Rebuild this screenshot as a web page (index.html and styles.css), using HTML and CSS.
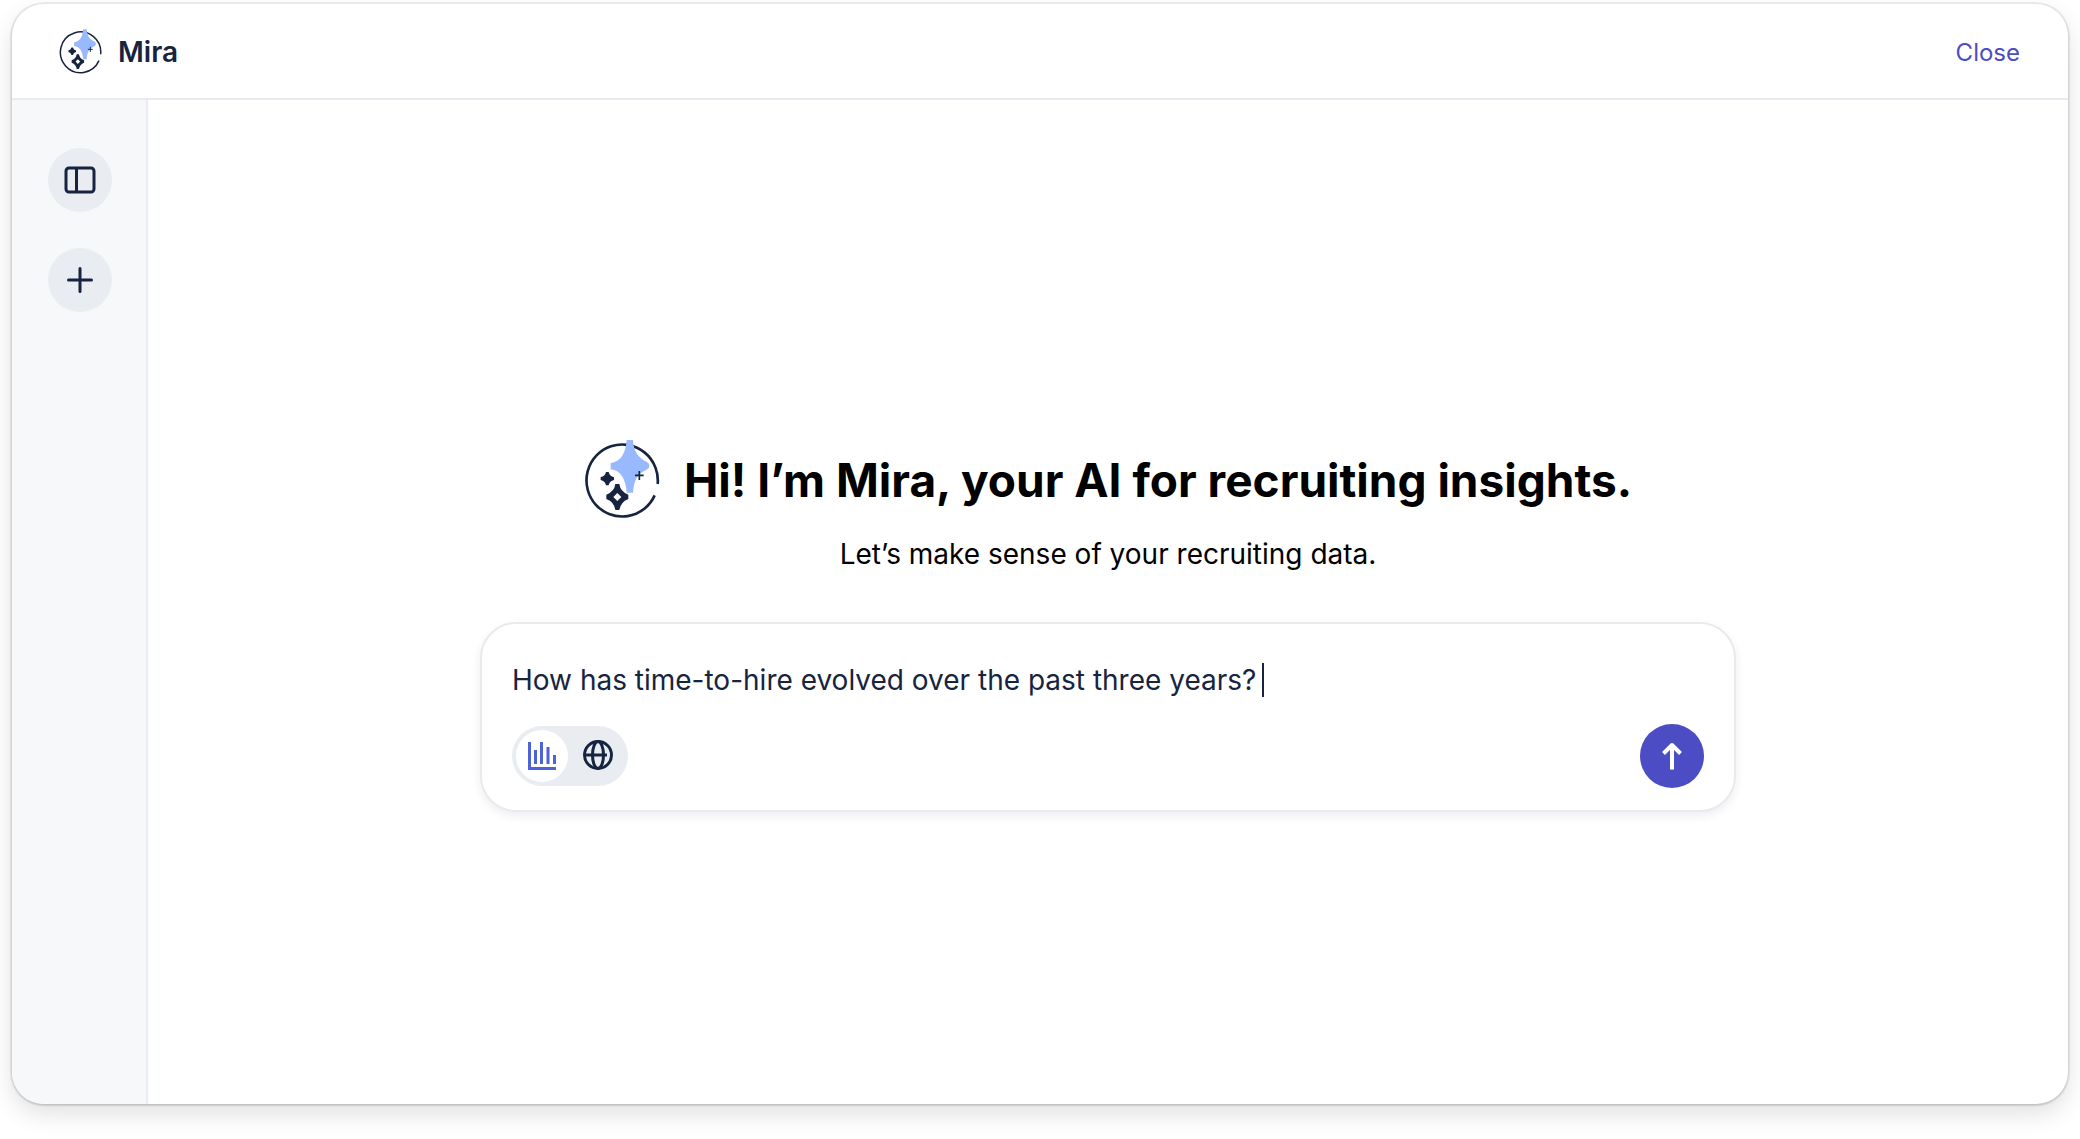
FILE: index.html
```html
<!DOCTYPE html>
<html lang="en">
<head>
  <meta charset="utf-8">
  <meta name="viewport" content="width=device-width, initial-scale=1">
  <title>Mira</title>
  <link rel="stylesheet" href="styles.css">
</head>
<body>
  <svg class="sprite" aria-hidden="true">
    <symbol id="mira-logo" viewBox="20 30 228 240">
      <path d="M241 162A107 108 0 1 0 232 196" fill="none" stroke="#172440" stroke-width="8"/>
      <path d="M148 30H167C169 62 180 82 209 96Q216 100 216 108Q216 116 207 120C180 132 170 150 167 188H148C145 148 132 122 100 118V99C132 95 145 68 148 30Z" fill="#99b9ff"/>
      <path d="M186 123V150M173 136H199" fill="none" stroke="#172440" stroke-width="5"/>
      <path d="M86 126H94Q97 139 110 142V150Q97 153 94 166H86Q83 153 70 150V142Q83 139 86 126Z" fill="#172440"/>
      <path fill-rule="evenodd" d="M114 162H126Q129 185 153 194V207Q130 216 126 240H114Q111 216 87 207V194Q111 185 114 162ZM120 189L108 201L120 213L132 201Z" fill="#172440"/>
    </symbol>
  </svg>

  <div class="window">
    <header class="topbar">
      <div class="brand">
        <svg class="brand-logo" aria-hidden="true"><use href="#mira-logo"/></svg>
        <span class="brand-name">Mira</span>
      </div>
      <button class="close" type="button">Close</button>
    </header>

    <div class="body">
      <nav class="sidebar" aria-label="Chats">
        <button class="round" type="button" aria-label="Toggle sidebar">
          <svg class="icon" viewBox="0 0 32 32" aria-hidden="true"><rect x="2" y="4" width="28" height="24" rx="3"/><path d="M12.500 4V28"/></svg>
        </button>
        <button class="round" type="button" aria-label="New chat">
          <svg class="icon" viewBox="0 0 32 32" aria-hidden="true"><path d="M16 4.500V27.500M4.500 16H27.500" stroke-linecap="round"/></svg>
        </button>
      </nav>

      <main class="content">
        <div class="greeting">
          <svg class="greeting-logo" aria-hidden="true"><use href="#mira-logo"/></svg>
          <h1 class="title">Hi! I’m Mira, your AI for recruiting insights.</h1>
        </div>
        <p class="subtitle">Let’s make sense of your recruiting data.</p>

        <form class="prompt">
          <label class="field">
            <input class="question" type="text" aria-label="Ask Mira" value="How has time-to-hire evolved over the past three years?">
            <span class="caret"></span>
          </label>
          <div class="actions">
            <div class="modes" role="radiogroup" aria-label="Source">
              <label class="mode">
                <input class="mode-input" type="radio" name="mode" aria-label="Your data" checked>
                <svg class="icon" viewBox="0 0 32 32" aria-hidden="true"><path d="M3.500 2V28.500H30M9.500 10V24M15.500 2V24M22 7V24M28.500 15V24"/></svg>
              </label>
              <label class="mode">
                <input class="mode-input" type="radio" name="mode" aria-label="Web">
                <svg class="icon" viewBox="0 0 32 32" aria-hidden="true"><circle cx="16" cy="15" r="13.500"/><ellipse cx="16" cy="15" rx="5.500" ry="13.500"/><path d="M2.500 15H25"/></svg>
              </label>
            </div>
            <button class="send" type="submit" aria-label="Send">
              <svg class="icon" viewBox="0 0 32 32" aria-hidden="true"><path d="M16 29.500V5M7.500 13.500L16 5L24.500 13.500" stroke-width="4" stroke-linejoin="round"/></svg>
            </button>
          </div>
        </form>
      </main>
    </div>
  </div>
</body>
</html>
```
FILE: styles.css
```css
* {
  box-sizing: border-box;
}

body {
  margin: 0;
  min-height: 100vh;
  padding: 4px 12px 35px;
  display: flex;
  background: #fff;
  color: #000;
  font-family: Inter, "Liberation Sans", sans-serif;
}

button,
input {
  font: inherit;
  color: inherit;
}

button {
  padding: 0;
  border: 0;
  background: none;
  cursor: pointer;
}

.sprite {
  position: absolute;
  width: 0;
  height: 0;
}

.window {
  flex: 1;
  display: flex;
  flex-direction: column;
  overflow: hidden;
  border-radius: 32px;
  background: #fff;
  box-shadow:
    0 0 0 2px rgba(0, 0, 0, 0.06),
    0 1px 3px rgba(0, 0, 0, 0.15),
    0 10px 24px rgba(0, 0, 0, 0.12);
}

.topbar {
  display: flex;
  align-items: center;
  justify-content: space-between;
  height: 96px;
  padding: 2px 48px 0 47px;
  border-bottom: 2px solid #e9eaef;
}

.brand {
  display: flex;
  align-items: center;
  gap: 16px;
  color: #172440;
}

.brand-logo {
  width: 43px;
  height: 46px;
}

.brand-name {
  font-size: 28px;
  font-weight: 600;
}

.close {
  color: #4c4cc4;
  font-size: 24px;
}

.body {
  flex: 1;
  display: flex;
}

.sidebar {
  display: flex;
  flex-direction: column;
  align-items: center;
  gap: 36px;
  width: 136px;
  padding: 48px 0 0 2px;
  border-right: 2px solid #e9ecf2;
  background: #f6f8fa;
}

.round,
.send {
  display: grid;
  place-items: center;
  width: 64px;
  height: 64px;
  border-radius: 50%;
}

.round {
  background: #e9edf2;
  color: #172440;
}

.icon {
  width: 32px;
  height: 32px;
  fill: none;
  stroke: currentColor;
  stroke-width: 3;
}

.content {
  flex: 1;
  display: flex;
  flex-direction: column;
  align-items: center;
  padding: 340px 32px 48px;
}

.greeting {
  display: flex;
  align-items: center;
  gap: 24px;
}

.greeting-logo {
  width: 76px;
  height: 80px;
}

.title {
  margin: 0;
  font-size: 46px;
  font-weight: 700;
  line-height: 56px;
}

.subtitle {
  margin: 16px 0 50px;
  font-size: 28px;
  line-height: 36px;
}

.prompt {
  width: 100%;
  max-width: 1256px;
  padding: 38px 30px 22px;
  border: 2px solid #e8eaed;
  border-radius: 36px;
  background: #fff;
  box-shadow: 0 4px 10px rgba(23, 36, 64, 0.08);
}

.field {
  display: flex;
  align-items: center;
  gap: 6px;
  height: 36px;
  color: #172440;
  font-size: 28px;
  cursor: text;
}

.question {
  field-sizing: content;
  max-width: 100%;
  padding: 0;
  border: 0;
  outline: 0;
  background: none;
  caret-color: transparent;
}

.caret {
  width: 2px;
  height: 34px;
  background: #172440;
}

.actions {
  display: flex;
  align-items: center;
  justify-content: space-between;
  margin-top: 26px;
}

.modes {
  display: flex;
  gap: 4px;
  padding: 4px;
  border-radius: 30px;
  background: #e9edf2;
}

.mode {
  display: grid;
  place-items: center;
  width: 52px;
  height: 52px;
  border-radius: 50%;
  color: #172440;
  cursor: pointer;
}

.mode:has(.mode-input:checked) {
  background: #fff;
  color: #4c63d9;
}

.mode-input {
  position: absolute;
  margin: 0;
  opacity: 0;
}

.send {
  background: #4c4cc4;
  color: #fff;
}
```
